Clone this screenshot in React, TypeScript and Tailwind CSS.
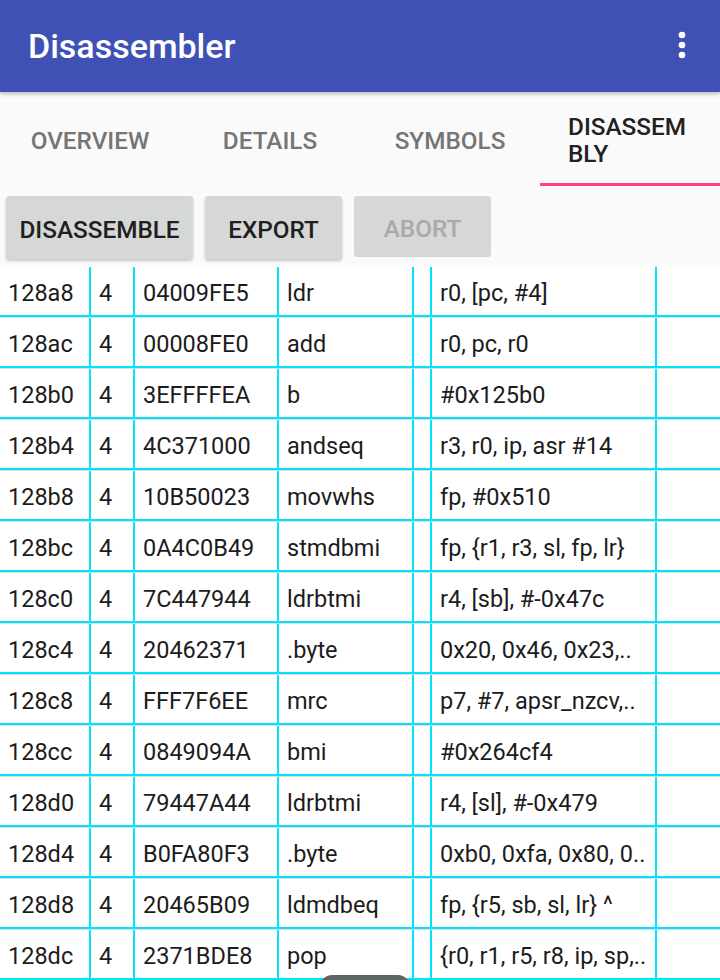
import React from 'react';

type Row = [string, string, string, string, string];

const ROWS: Row[] = [
  ['128a8', '4', '04009FE5', 'ldr', 'r0, [pc, #4]'],
  ['128ac', '4', '00008FE0', 'add', 'r0, pc, r0'],
  ['128b0', '4', '3EFFFFEA', 'b', '#0x125b0'],
  ['128b4', '4', '4C371000', 'andseq', 'r3, r0, ip, asr #14'],
  ['128b8', '4', '10B50023', 'movwhs', 'fp, #0x510'],
  ['128bc', '4', '0A4C0B49', 'stmdbmi', 'fp, {r1, r3, sl, fp, lr}'],
  ['128c0', '4', '7C447944', 'ldrbtmi', 'r4, [sb], #-0x47c'],
  ['128c4', '4', '20462371', '.byte', '0x20, 0x46, 0x23,..'],
  ['128c8', '4', 'FFF7F6EE', 'mrc', 'p7, #7, apsr_nzcv,..'],
  ['128cc', '4', '0849094A', 'bmi', '#0x264cf4'],
  ['128d0', '4', '79447A44', 'ldrbtmi', 'r4, [sl], #-0x479'],
  ['128d4', '4', 'B0FA80F3', '.byte', '0xb0, 0xfa, 0x80, 0..'],
  ['128d8', '4', '20465B09', 'ldmdbeq', 'fp, {r5, sb, sl, lr} ^'],
  ['128dc', '4', '2371BDE8', 'pop', '{r0, r1, r5, r8, ip, sp,..'],
];

const TABS = ['OVERVIEW', 'DETAILS', 'SYMBOLS'];

const cell = 'h-[50px] flex items-center pl-[8px] pt-[5px] border-r-2 border-b-2 border-[#00E5FF] whitespace-nowrap overflow-hidden';

const TableRow = ({ row }: { row: Row }) => (
  <div className="flex border-b border-[#dedede] bg-white text-[23.5px] text-[#1c1c1c]">
    <div className={`${cell} w-[91px]`}>{row[0]}</div>
    <div className={`${cell} w-[44px]`}>{row[1]}</div>
    <div className={`${cell} w-[144px]`}>{row[2]}</div>
    <div className={`${cell} w-[135px]`}>{row[3]}</div>
    <div className={`${cell} w-[18px]`} />
    <div className={`${cell} w-[225px]`}>{row[4]}</div>
    <div className="h-[50px] flex-1 border-b-2 border-[#00E5FF]" />
  </div>
);

export default function App() {
  return (
    <div className="relative w-[720px] h-[980px] overflow-hidden bg-[#fafafa] font-['Roboto',sans-serif]">
      {/* Toolbar */}
      <div className="relative z-10 h-[92px] bg-[#3f51b5] flex items-center justify-between pl-[28px] pr-[34px] shadow-[0_2px_4px_rgba(0,0,0,0.25)]">
        <span className="text-[34px] font-medium text-white">Disassembler</span>
        <svg width="8" height="30" viewBox="0 0 8 30" fill="white">
          <circle cx="4" cy="4" r="3.3" />
          <circle cx="4" cy="14" r="3.3" />
          <circle cx="4" cy="24" r="3.3" />
        </svg>
      </div>

      {/* Tabs */}
      <div className="flex h-[94px]">
        {TABS.map((t) => (
          <div key={t} className="w-[180px] flex items-center justify-center pt-[4px] text-[24.3px] font-medium text-[#757575]">
            {t}
          </div>
        ))}
        <div className="w-[180px] flex items-center justify-center border-b-[3px] border-[#ff4081] pt-[5px] pr-[6px]">
          <div className="text-[24.3px] font-medium text-[#212121] leading-[27px] text-left">
            DISASSEM
            <br />
            BLY
          </div>
        </div>
      </div>

      {/* Actions */}
      <div className="flex gap-[12px] pl-[6px] pt-[10px] h-[81px]">
        <button className="w-[187px] h-[63px] pt-[5px] rounded-[3px] bg-[#d6d7d7] text-[24.3px] font-medium text-[#1f1f1f] shadow-[0_2px_3px_rgba(0,0,0,0.2)]">
          DISASSEMBLE
        </button>
        <button className="w-[137px] h-[63px] pt-[5px] rounded-[3px] bg-[#d6d7d7] text-[24.3px] font-medium text-[#1f1f1f] shadow-[0_2px_3px_rgba(0,0,0,0.2)]">
          EXPORT
        </button>
        <button className="w-[137px] h-[61px] pt-[5px] rounded-[3px] bg-[#d6d7d7] text-[24.3px] font-medium text-[#a9a9a9]">
          ABORT
        </button>
      </div>

      {/* Disassembly table */}
      <div className="flex flex-col">
        {ROWS.map((r) => (
          <TableRow key={r[0]} row={r} />
        ))}
      </div>

      {/* Peeking scroll handle */}
      <div className="absolute left-[320px] top-[975px] w-[90px] h-[24px] rounded-full bg-[#5a6564]" />
    </div>
  );
}
